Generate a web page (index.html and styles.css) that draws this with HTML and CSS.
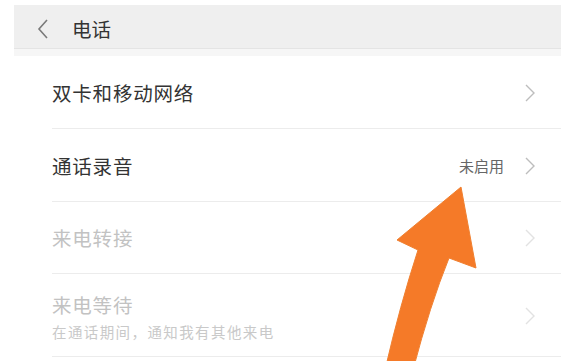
FILE: index.html
```html
<!DOCTYPE html>
<html lang="zh">
<head>
<meta charset="utf-8">
<link rel="stylesheet" href="styles.css">
</head>
<body>
<div class="screen">
  <header class="topbar">
    <svg class="back" width="12" height="20" viewBox="0 0 12 20"><polyline points="10,1 2,10 10,19" fill="none" stroke="#7a7a7a" stroke-width="1.6"/></svg>
    <span class="title">电话</span>
  </header>
  <div class="band"></div>
  <ul class="list">
    <li class="row">
      <div class="label">双卡和移动网络</div>
      <svg class="chev" width="10" height="18" viewBox="0 0 10 18"><polyline points="1,1 9,9 1,17" fill="none" stroke="#bdbdbd" stroke-width="1.4"/></svg>
    </li>
    <li class="row">
      <div class="label">通话录音</div>
      <span class="value">未启用</span>
      <svg class="chev" width="10" height="18" viewBox="0 0 10 18"><polyline points="1,1 9,9 1,17" fill="none" stroke="#bdbdbd" stroke-width="1.4"/></svg>
    </li>
    <li class="row disabled">
      <div class="label">来电转接</div>
      <svg class="chev" width="10" height="18" viewBox="0 0 10 18"><polyline points="1,1 9,9 1,17" fill="none" stroke="#e2e2e2" stroke-width="1.4"/></svg>
    </li>
    <li class="row disabled tall">
      <div class="label">来电等待<span class="sub">在通话期间，通知我有其他来电</span></div>
      <svg class="chev" width="10" height="18" viewBox="0 0 10 18"><polyline points="1,1 9,9 1,17" fill="none" stroke="#e2e2e2" stroke-width="1.4"/></svg>
    </li>
  </ul>
</div>
<svg class="arrow" width="573" height="361" viewBox="0 0 573 361">
  <path d="M461,187 L476,268 L449,258 Q430,305 413,370 L385,370 Q400,305 418,250 L397,240 Z" fill="#f57a28" stroke="#f08030" stroke-width="1" stroke-linejoin="round"/>
</svg>
</body>
</html>
```
FILE: styles.css
```css
* { box-sizing: border-box; }
html, body { margin: 0; padding: 0; background: #fff; }
body {
  width: 573px;
  height: 361px;
  overflow: hidden;
  position: relative;
  font-family: "Noto Sans CJK SC", "Noto Sans", sans-serif;
}
.screen {
  margin-left: 14px;
  width: 547px;
  padding-top: 5px;
}
.topbar {
  height: 44px;
  background: #efefef;
  display: flex;
  align-items: center;
  padding-left: 23px;
  border-bottom: 1px solid #e4e4e4;
}
.back { margin-top: 4px; }
.title {
  margin-left: 23px;
  font-size: 19.5px;
  color: #333;
  margin-top: 3px;
}
.band {
  height: 7px;
  background: #f6f6f6;
}
.list {
  list-style: none;
  margin: 0;
  padding: 0 0 0 38px;
}
.row {
  height: 73px;
  display: flex;
  align-items: center;
  border-bottom: 1px solid #ececec;
  padding-right: 26px;
}
.row:nth-child(3) { height: 72px; }
.label {
  flex: 1;
  font-size: 19.5px;
  color: #333;
  letter-spacing: 0.8px;
  display: flex;
  flex-direction: column;
}
.value {
  font-size: 15px;
  color: #666;
  margin-right: 21px;
}
.chev { flex: none; margin-top: 1px; }
.disabled .label { color: #c2c2c2; }
.tall { height: 83px; }
.tall .label { margin-top: 2px; }
.sub {
  font-size: 14.5px;
  color: #c9c9c9;
  letter-spacing: 1.4px;
  margin-top: 2px;
}
.arrow {
  position: absolute;
  left: 0;
  top: 0;
  pointer-events: none;
}
```
